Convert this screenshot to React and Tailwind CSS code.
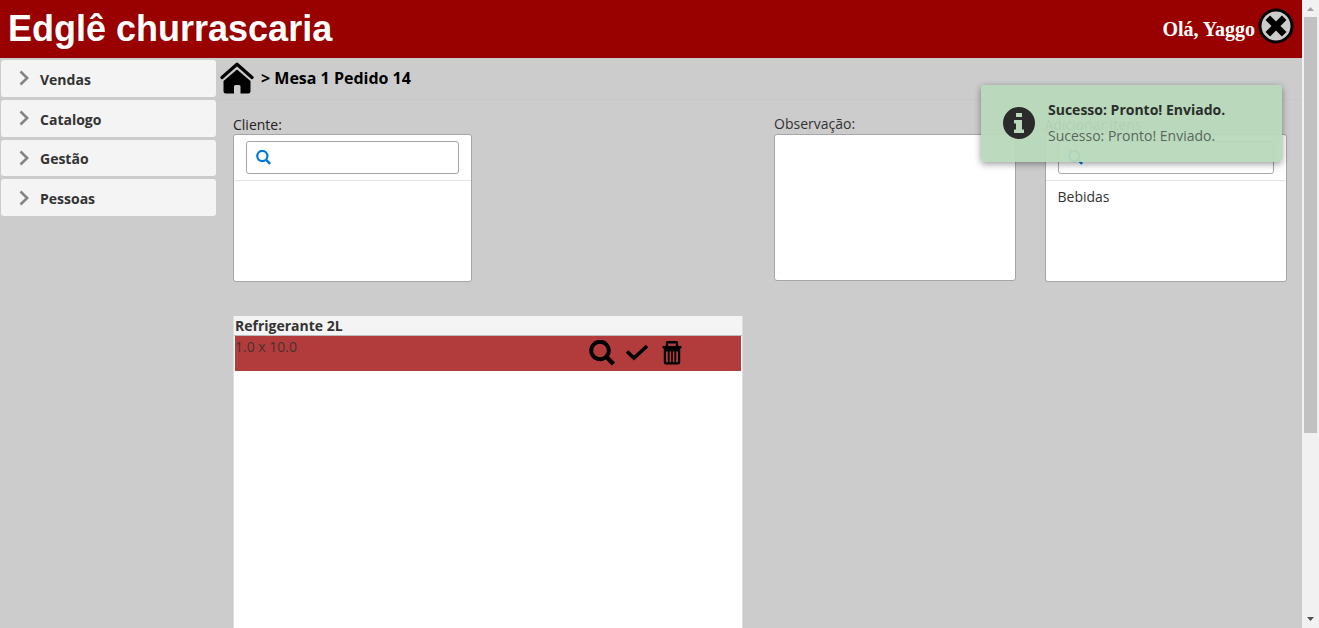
import React from "react";

const MENU = ["Vendas", "Catalogo", "Gestão", "Pessoas"];

function SearchIcon({ className }) {
  return (
    <svg viewBox="0 0 26 26" className={className} fill="none" stroke="currentColor" aria-hidden="true">
      <circle cx="11" cy="10.5" r="8.8" strokeWidth="3.9" />
      <path d="M18 17.5 L24.5 24" strokeWidth="4.4" />
    </svg>
  );
}

function CheckIcon() {
  return (
    <svg viewBox="0 0 24 17" className="h-[17px] w-6" fill="none" stroke="currentColor" strokeWidth="3.6" aria-hidden="true">
      <path d="M2 7.5 L9 14 L22 2" />
    </svg>
  );
}

function TrashIcon() {
  return (
    <svg viewBox="0 0 20 24" className="h-6 w-5" aria-hidden="true">
      <path d="M5 6 V2.2 Q5 1.2 6 1.2 H14 Q15 1.2 15 2.2 V6" fill="none" stroke="currentColor" strokeWidth="2.4" />
      <path d="M.5 5 H19.5 V7.5 H18.2 V21.5 Q18.2 23.4 16 23.4 H4 Q1.8 23.4 1.8 21.5 V7.5 H.5Z M4 10.5 V21.3 H5.8 V10.5Z M7.6 10.5 V21.3 H9.2 V10.5Z M10.8 10.5 V21.3 H12.4 V10.5Z M14.2 10.5 V21.3 H16 V10.5Z" fill="currentColor" fillRule="evenodd" />
    </svg>
  );
}

function HomeIcon() {
  return (
    <svg viewBox="0 0 34 32" className="h-8 w-[34px]" aria-hidden="true">
      <path d="M2 15.5 L17 2.2 L32 15.5" fill="none" stroke="#000" strokeWidth="3.2" strokeLinecap="round" strokeLinejoin="round" />
      <path d="M17 7.5 L30.5 19 V29 Q30.5 31.5 28 31.5 H20.5 V24.5 Q20.5 23 19 23 H15.5 Q14 23 14 24.5 V31.5 H6 Q3.5 31.5 3.5 29 V19Z" fill="#000" />
    </svg>
  );
}

function CloseIcon() {
  return (
    <svg viewBox="0 0 36 36" className="size-9" aria-hidden="true">
      <circle cx="18" cy="18" r="16" fill="#ccc" stroke="#000" strokeWidth="3" />
      <path d="M9.8 9.8 L26.2 26.2 M26.2 9.8 L9.8 26.2" stroke="#000" strokeWidth="6.4" />
    </svg>
  );
}

function InfoIcon() {
  return (
    <svg viewBox="0 0 32 32" className="size-8 shrink-0" aria-hidden="true">
      <path fillRule="evenodd" fill="#2b2b2b" d="M16 0a16 16 0 1 1 0 32a16 16 0 1 1 0-32Z M13 6H19V10H13Z M11 13H19V22.5H21V26H11V22.5H13V16.5H11Z" />
    </svg>
  );
}

function ListBox({ id, label, items = [], className = "" }) {
  return (
    <div className={className}>
      <label htmlFor={id} className="block h-[18px] text-sm leading-[18px]">{label}</label>
      <div className="h-[148px] rounded-[3px] border border-[#a6a6a6] bg-white">
        <div className="border-b border-[#e5e5e5] px-3 py-[6px]">
          <div className="flex h-[33px] items-center rounded-[3px] border border-[#a6a6a6] pl-[9px]">
            <SearchIcon className="size-[15px] text-[#0078d7]" />
            <input id={id} type="text" className="h-full min-w-0 flex-1 bg-transparent px-2 text-sm outline-none" />
          </div>
        </div>
        <ul className="px-3 py-[6px] text-sm text-[#333]">
          {items.map((item) => <li key={item}>{item}</li>)}
        </ul>
      </div>
    </div>
  );
}

function Header() {
  return (
    <header className="flex h-[58px] items-center justify-between bg-[#990000] px-2 text-white">
      <h1 className="font-['Liberation_Sans',sans-serif] text-4xl font-bold">Edglê churrascaria</h1>
      <div className="flex items-center gap-[3px] pb-[6px]">
        <span className="pt-[6px] font-['Liberation_Serif',serif] text-[20px] font-bold">Olá, Yaggo</span>
        <button type="button" aria-label="Sair"><CloseIcon /></button>
      </div>
    </header>
  );
}

function Sidebar() {
  return (
    <nav className="w-[217px] shrink-0 px-px pt-[2px]">
      <ul className="grid h-[156px] grid-rows-4 gap-[3px]">
        {MENU.map((name) => (
          <li key={name}>
            <button type="button" className="flex h-full w-full items-center gap-[11px] rounded-[3px] bg-[#f4f4f4] pt-[3px] pl-[18px] text-sm font-bold text-[#333]">
              <svg viewBox="0 0 10 16" className="mb-[3px] h-4 w-[10px]" fill="none" stroke="#848484" strokeWidth="2.6" aria-hidden="true">
                <path d="M1.5 1.5 L8.2 8 L1.5 14.5" />
              </svg>
              {name}
            </button>
          </li>
        ))}
      </ul>
    </nav>
  );
}

function Order() {
  return (
    <section className="flex h-[640px] w-[510px] flex-col border-x border-[#ddd] bg-white">
      <h2 className="h-5 border-b border-[#bbb] bg-[#f4f4f4] pl-px text-sm leading-5 font-bold text-[#333]">Refrigerante 2L</h2>
      <div className="mx-px flex h-[35px] justify-between bg-[#b23c3c] pr-[59px]">
        <p className="text-sm leading-[22px] text-[#4a3030]">1.0 x 10.0</p>
        <div className="flex items-center gap-[10px] pb-[2px] text-black">
          <button type="button" aria-label="Detalhes"><SearchIcon className="size-[26px]" /></button>
          <button type="button" aria-label="Confirmar"><CheckIcon /></button>
          <button type="button" aria-label="Excluir" className="pl-[3px]"><TrashIcon /></button>
        </div>
      </div>
    </section>
  );
}

function Toast() {
  return (
    <div role="status" className="absolute top-[85px] right-5 flex h-[77px] w-[301px] items-center gap-[13px] rounded-[3px] bg-[#b8d9ba]/95 pb-[2px] pl-[22px] shadow-[0_2px_7px_rgba(0,0,0,0.4)]">
      <InfoIcon />
      <div className="text-sm leading-[26px]">
        <p className="font-bold text-[#2b2e2b]">Sucesso: Pronto! Enviado.</p>
        <p className="text-[#5a665b]">Sucesso: Pronto! Enviado.</p>
      </div>
    </div>
  );
}

function Scrollbar() {
  return (
    <div aria-hidden="true" className="flex w-[17px] shrink-0 flex-col items-center bg-[#f1f1f1]">
      <svg viewBox="0 0 17 17" className="size-[17px]"><path d="M5 11 L8.5 7 L12 11Z" fill="#a3a3a3" /></svg>
      <div className="flex w-[13px] flex-1 flex-col">
        <div className="h-[70%] bg-[#c1c1c1]" />
      </div>
      <svg viewBox="0 0 17 17" className="size-[17px]"><path d="M5 6 L8.5 10 L12 6Z" fill="#505050" /></svg>
    </div>
  );
}

export default function App() {
  return (
    <div className="flex h-screen overflow-hidden bg-[#ccc] font-['Open_Sans',sans-serif] text-[#222]">
      <div className="relative min-w-0 flex-1 overflow-hidden">
        <Header />
        <div className="flex">
          <Sidebar />
          <main className="min-w-0 flex-1">
            <div className="flex h-[42px] items-center gap-[7px] border-b border-[#c8c8c8] pb-[2px] pl-[3px] font-bold text-black">
              <a href="#" aria-label="Início"><HomeIcon /></a>
              <span className="text-base">&gt; Mesa 1 Pedido 14</span>
            </div>
            <div className="grid grid-cols-4 gap-x-7 pt-4 pr-[15px] pl-4">
              <ListBox id="cliente" label="Cliente:" className="pr-1" />
              <div className="col-start-3 pr-px">
                <label htmlFor="obs" className="block h-[18px] text-sm leading-4 text-[#333]">Observação:</label>
                <textarea id="obs" className="block h-[147px] w-full resize-none rounded-[3px] border border-[#a6a6a6] bg-white p-1 text-sm outline-none" />
              </div>
              <ListBox id="itens" label="Adicionar itens" items={["Bebidas"]} />
            </div>
            <div className="pt-[34px] pl-4"><Order /></div>
          </main>
        </div>
        <Toast />
      </div>
      <Scrollbar />
    </div>
  );
}
